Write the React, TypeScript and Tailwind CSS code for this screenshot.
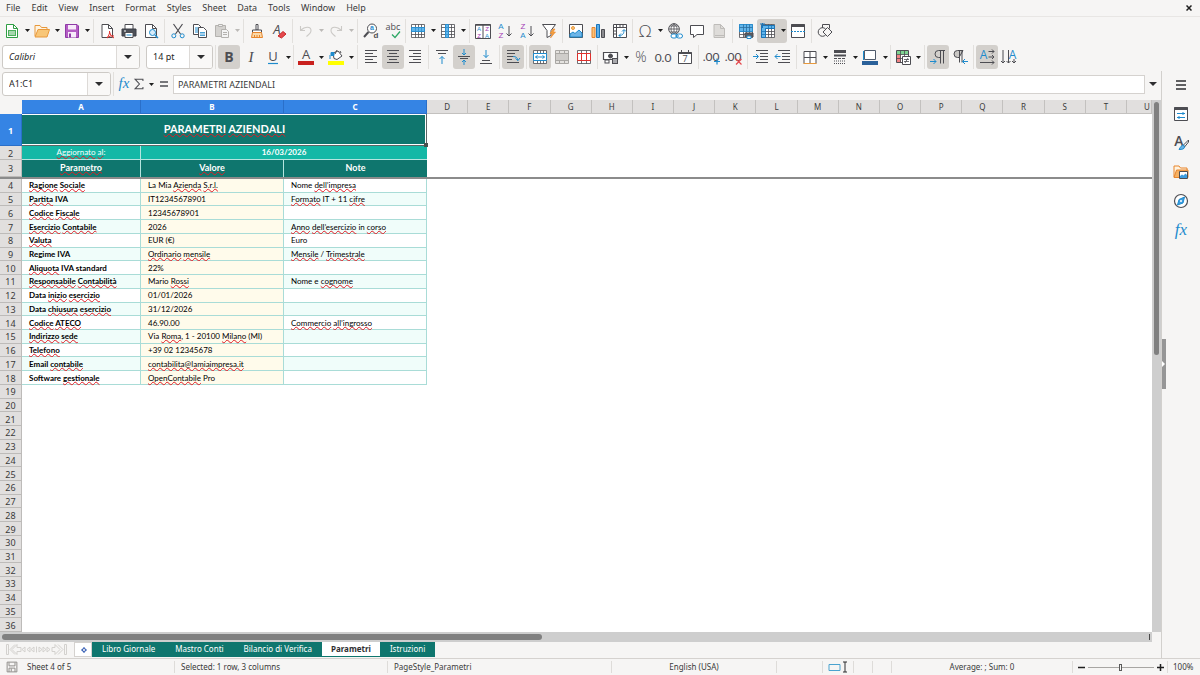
import { useState, type ReactNode } from 'react'
import clsx from 'clsx'

const INK = '#4d4d52'
const BLUE = '#1e8bcd'
const COLS = 'grid grid-cols-[22px_119px_143px_143px_repeat(17,minmax(0,1fr))_25px]'

const menus = ['File', 'Edit', 'View', 'Insert', 'Format', 'Styles', 'Sheet', 'Data', 'Tools', 'Window', 'Help']
const letters = 'ABCDEFGHIJKLMNOPQRSTU'.split('')

// words between brackets are flagged by the spell checker
const rows: [string, string, string][] = [
  ['[Ragione] [Sociale]', 'La Mia [Azienda] [S.r.l.]', 'Nome [dell’impresa]'],
  ['[Partita] IVA', 'IT12345678901', '[Formato] IT + 11 [cifre]'],
  ['[Codice] [Fiscale]', '12345678901', ''],
  ['[Esercizio] [Contabile]', '2026', '[Anno] [dell’esercizio] in [corso]'],
  ['[Valuta]', 'EUR (€)', 'Euro'],
  ['Regime IVA', '[Ordinario] [mensile]', '[Mensile] / [Trimestrale]'],
  ['[Aliquota] IVA standard', '22%', ''],
  ['[Responsabile] [Contabilità]', 'Mario [Rossi]', 'Nome e [cognome]'],
  ['Data [inizio] [esercizio]', '01/01/2026', ''],
  ['Data [chiusura] [esercizio]', '31/12/2026', ''],
  ['[Codice] [ATECO]', '46.90.00', '[Commercio] [all’ingrosso]'],
  ['[Indirizzo] [sede]', 'Via [Roma], 1 - 20100 [Milano] (MI)', ''],
  ['[Telefono]', '+39 02 12345678', ''],
  ['Email [contabile]', '[contabilita@lamiaimpresa.it]', ''],
  ['Software [gestionale]', '[OpenContabile] Pro', ''],
]

const sheets = ['Libro Giornale', 'Mastro Conti', 'Bilancio di Verifica', 'Parametri', 'Istruzioni']

function Spelled({ text }: { text: string }) {
  return (
    <span>
      {text.split(/(\[[^\]]+\])/).map((part, i) =>
        part.startsWith('[') ? (
          <span
            key={i}
            className="underline decoration-[#e01b24] decoration-wavy decoration-1 underline-offset-0 [text-decoration-skip-ink:none]"
          >
            {part.slice(1, -1)}
          </span>
        ) : (
          part
        ),
      )}
    </span>
  )
}

function Svg({ children, size = 16 }: { children: ReactNode; size?: number }) {
  return (
    <svg
      width={size}
      height={size}
      viewBox="0 0 16 16"
      fill="none"
      stroke={INK}
      strokeWidth="1"
      className="shrink-0 overflow-visible"
    >
      {children}
    </svg>
  )
}

function Glyph({
  x = 8,
  y = 13,
  size = 14,
  color = INK,
  weight = 400,
  italic = false,
  family = 'Open Sans, sans-serif',
  children,
}: {
  x?: number
  y?: number
  size?: number
  color?: string
  weight?: number
  italic?: boolean
  family?: string
  children: string
}) {
  return (
    <text
      x={x}
      y={y}
      fontSize={size}
      fill={color}
      stroke="none"
      fontWeight={weight}
      fontStyle={italic ? 'italic' : 'normal'}
      fontFamily={family}
      textAnchor="middle"
    >
      {children}
    </text>
  )
}

const SERIF = 'Liberation Serif, serif'
const SANS = 'Liberation Sans, sans-serif'

const lines = (spec: [number, number, number][]) => <path d={spec.map(([x, y, w]) => `M${x} ${y}h${w}`).join('')} />

const gridPath = 'M1.5 1.5h13v13h-13zM1.5 4.5h13M1.5 8.5h13M1.5 11.5h13M5.5 1.5v13M8.5 1.5v13M11.5 1.5v13'
const sheetGrid = <path d={gridPath} fill="#fff" strokeWidth=".8" />

const icons: Record<string, ReactNode> = {
  New: (
    <>
      <path d="M2.5 1.5h7l4 4v9h-11z" fill="#fff" stroke="#2f9e44" />
      <path d="M9.5 1.5v4h4" stroke="#2f9e44" />
      <path d="M4 7h8v6H4z" fill="#4caf5c" stroke="none" />
      <path d="M5 9h6M5 11h6" stroke="#fff" />
    </>
  ),
  Open: (
    <>
      <path d="M1 13V2.5h5l1.5 2H13V7" fill="#fff3df" stroke="#e8993c" />
      <path d="M1 14l3-7.5h11.5L13 14z" fill="#f8c677" stroke="#e8993c" />
    </>
  ),
  Save: (
    <>
      <path d="M1.5 1.5H13L14.5 3v11.5h-13z" fill="#b45cc4" stroke="#8e3aa6" />
      <path d="M4 2h8v4.5H4zM4 9h8v5.5H4z" fill="#f7eafa" stroke="none" />
      <path d="M6 10.5v4" stroke="#8e3aa6" strokeWidth="2" />
    </>
  ),
  'Export as PDF': (
    <>
      <path d="M3 1.5h6.5l4 4v9H3z" fill="#fff" />
      <path d="M9.5 1.5v4h4" />
      <path d="M8 15c2-3 3-5 2.5-7M8 15c2.5-2 4-2.5 7-2M10.5 9c1 3 2 4.5 4.5 6" stroke="#e0302c" />
    </>
  ),
  Print: (
    <>
      <path d="M4 6V1.5h8V6" fill="#fff" />
      <path d="M1 6h14v7H1z" fill="#4d5058" stroke="#3b3d44" />
      <path d="M4 9.5h8v5H4z" fill="#fff" />
      <path d="M3 8h2" stroke="#fff" />
      <path d="M5.5 12h5" stroke={BLUE} />
    </>
  ),
  'Print Preview': (
    <>
      <path d="M2.5 1.5h7l4 4v9h-11z" fill="#fff" />
      <path d="M9.5 1.5v4h4" />
      <circle cx="9.5" cy="9.5" r="3" fill="#d8ecfa" stroke={BLUE} />
      <path d="M12 12l3 3" stroke={BLUE} strokeWidth="1.5" />
    </>
  ),
  Cut: (
    <>
      <path d="M3.5 1l7 10M12.5 1l-7 10" strokeWidth="1.2" />
      <circle cx="3.8" cy="12.8" r="2" stroke={BLUE} />
      <circle cx="12.2" cy="12.8" r="2" stroke={BLUE} />
    </>
  ),
  Copy: (
    <>
      <path d="M1.5 1.5h5l3 3v7h-8z" fill="#fff" />
      <path d="M3 5h4M3 7h3M3 9h3" stroke={BLUE} />
      <path d="M6.5 4.5h5l3 3v7h-8z" fill="#fff" />
      <path d="M8 9.5h5M8 11h5M8 12.5h5" stroke={BLUE} strokeWidth=".8" />
    </>
  ),
  Paste: (
    <>
      <path d="M1.5 2.5h10v11h-10z" fill="#d4d2cf" stroke="#b4b2af" />
      <path d="M4.5 1.5h4v2h-4z" fill="#eee" stroke="#b4b2af" />
      <path d="M7.5 6.5h5l2 2v6h-7z" fill="#f4f4f4" stroke="#b4b2af" />
      <path d="M9 9.5h4M9 11.5h4" stroke="#b4b2af" />
    </>
  ),
  'Clone Formatting': (
    <>
      <path d="M7 1.5h2V7H7z" fill="#fff" />
      <path d="M3.5 7h9v2.5h-9z" fill="#fff" />
      <path d="M3.5 9.5h9l1 5h-11z" fill="#fbd9a8" stroke="#e8852c" />
      <path d="M5.5 14v-2M8 14v-2M10.5 14v-2" stroke="#e8852c" />
    </>
  ),
  'Clear Formatting': (
    <>
      <Glyph x={6} y={11} size={13} italic>
        A
      </Glyph>
      <path d="M7 13l5-4.5 3 2.5-4.5 4z" fill="#e5484d" stroke="#c92a2a" />
    </>
  ),
  Undo: <path d="M2.5 3v4.5H7M3 7c4-4 10-3.5 10 .5 0 2.5-2 4-4.5 6" stroke="#cbc9c6" strokeWidth="1.1" />,
  Redo: <path d="M13.5 3v4.5H9M13 7c-4-4-10-3.5-10 .5 0 2.5 2 4 4.5 6" stroke="#cbc9c6" strokeWidth="1.1" />,
  'Find & Replace': (
    <>
      <circle cx="9" cy="5.5" r="4.5" fill="#fff" />
      <path d="M5.5 9L1 14" strokeWidth="2" />
      <Glyph x={9} y={7} size={7} color={BLUE} weight={700} family={SANS}>
        a
      </Glyph>
      <Glyph x={13} y={15} size={8} weight={700} family={SANS}>
        d
      </Glyph>
    </>
  ),
  Spelling: (
    <>
      <Glyph y={7} size={9}>
        abc
      </Glyph>
      <path d="M7 11.5l3 3 5-6" stroke="#2fa866" strokeWidth="1.3" />
    </>
  ),
  Row: (
    <>
      {sheetGrid}
      <path d="M1.5 4.5h13v4h-13z" fill="#62b5ea" stroke="#2a8fd0" />
      <path d="M5.5 4.5v4M8.5 4.5v4M11.5 4.5v4" stroke="#2a8fd0" strokeWidth=".8" />
    </>
  ),
  Column: (
    <>
      {sheetGrid}
      <path d="M5.5 1.5h3v13h-3z" fill="#62b5ea" stroke="#2a8fd0" />
      <path d="M5.5 4.5h3M5.5 8.5h3M5.5 11.5h3" stroke="#2a8fd0" strokeWidth=".8" />
    </>
  ),
  Sort: (
    <>
      <path d="M.5 1.5h15v14H.5zM8 1.5v14" fill="#fff" />
      <path d="M.5 2h15" strokeWidth="1.5" />
      <Glyph x={4} y={8} size={6} color={BLUE} family={SANS}>
        A
      </Glyph>
      <Glyph x={4} y={15} size={6} color="#a33bb5" family={SANS}>
        Z
      </Glyph>
      <Glyph x={12} y={8} size={6} color="#a33bb5" family={SANS}>
        Z
      </Glyph>
      <Glyph x={12} y={15} size={6} color={BLUE} family={SANS}>
        A
      </Glyph>
    </>
  ),
  'Sort Ascending': (
    <>
      <Glyph x={4} y={6} size={8} color={BLUE} family={SANS}>
        A
      </Glyph>
      <Glyph x={4} y={15} size={8} color="#a33bb5" family={SANS}>
        Z
      </Glyph>
      <path d="M12 3v10M9.5 10.5L12 13l2.5-2.5" />
    </>
  ),
  'Sort Descending': (
    <>
      <Glyph x={4} y={6} size={8} color="#a33bb5" family={SANS}>
        Z
      </Glyph>
      <Glyph x={4} y={15} size={8} color={BLUE} family={SANS}>
        A
      </Glyph>
      <path d="M12 3v10M9.5 10.5L12 13l2.5-2.5" />
    </>
  ),
  AutoFilter: (
    <>
      <path d="M1.5 1.5h13l-4.500 6v5l-4 2V7.500z" fill="#fff" />
      <path d="M12 6l-3 4.500h2.500L9.500 15l5-6h-2.500L14 6z" fill="#f5a13c" stroke="#e8852c" strokeWidth=".6" />
    </>
  ),
  Image: (
    <>
      <path d="M1.5 1.5h13v13h-13z" fill="#fff" />
      <circle cx="5" cy="5" r="1.5" fill="#f9c27a" stroke="#e8993c" />
      <path d="M2 14v-3l3-2 2 1.5L11 7l3 3v4z" fill="#6db5e8" stroke={BLUE} />
    </>
  ),
  Chart: (
    <>
      <path d="M2 4.5h3v10H2z" fill="#f9c27a" stroke="#e8852c" />
      <path d="M6.5 1.5h3v13h-3z" fill="#5aaeea" stroke="#1b75b8" />
      <path d="M11.5 6.5h3v8h-3z" fill="#8a8a8e" />
    </>
  ),
  'Pivot Table': (
    <>
      <path d="M1.5 1.5h13v13h-13zM1.5 4.5h13M4.5 1.5v13M8 1.5v3M11 1.5v3M1.5 8h3M1.5 11h3" fill="#fff" />
      <path d="M7 12.5c4 0 5-2 5-5.5M7 12.5l2-2M7 12.5l2 2M12 6.5l-2 2M12 6.5l2 2" stroke={BLUE} />
    </>
  ),
  'Special Character': (
    <Glyph size={17} y={14} weight={300}>
      Ω
    </Glyph>
  ),
  Hyperlink: (
    <>
      <circle cx="7" cy="6" r="5.3" fill="#fff" />
      <path d="M1.7 6h10.6M7 .7v10.6M3 3h8M3 9h8M7 .7c-4 3-4 7.5 0 10.6M7 .7c4 3 4 7.5 0 10.6" strokeWidth=".8" />
      <rect x="4" y="11" width="6" height="4" rx="2" stroke={BLUE} fill="#fff" />
      <rect x="9.5" y="11" width="6" height="4" rx="2" stroke={BLUE} fill="#fff" />
      <path d="M8 13h4" stroke={BLUE} />
    </>
  ),
  Comment: <path d="M1.5 2.5h13v9H8l-3.500 3v-3h-3z" fill="#fff" />,
  'Headers and Footers': (
    <>
      <path d="M3 1.5h6.5l4 4v9H3z" fill="#dedcd9" stroke="#bebcb9" />
      <path d="M9.5 1.5v4h4M4 12.5h9" stroke="#bebcb9" />
    </>
  ),
  'Print Area': (
    <>
      {sheetGrid}
      <path d="M1.5 1.5h13v7h-13z" fill="#62b5ea" stroke="#2a8fd0" />
      <path d="M1.5 4.5h13M5.5 1.5v7M8.5 1.5v7M11.5 1.5v7" stroke="#2a6fa0" strokeWidth=".8" />
      <path d="M7 10h8v4H7z" fill="#5a5c62" />
      <path d="M9 13h4v2.5H9z" fill="#fff" stroke={BLUE} />
    </>
  ),
  Freeze: (
    <>
      {sheetGrid}
      <path d="M1.5 2.5h13v3h-9v9h-4z" fill="#62b5ea" stroke="#1b75b8" />
      <path d="M8.5 2.5v3M11.5 2.5v3M1.5 8.5h4M1.5 11.5h4" stroke="#1b75b8" strokeWidth=".8" />
      <path d="M0 1h5M2.5 0v5" stroke="#1b75b8" />
    </>
  ),
  'Split Window': (
    <>
      <path d="M1.5 1.5h13v13h-13z" fill="#fff" />
      <path d="M1.5 2.5h13" strokeWidth="3" />
      <path d="M1 8.5h14" stroke={BLUE} strokeDasharray="2 1" />
    </>
  ),
  Shapes: (
    <>
      <path d="M5.5 5V1.5h7v4" />
      <circle cx="5.5" cy="9" r="4.3" />
      <path d="M10.5 4.500l4.500 4.500-4.500 4.500L6 9z" fill="#f6f5f4" />
    </>
  ),
  Bold: (
    <Glyph weight={700} size={14}>
      B
    </Glyph>
  ),
  Italic: (
    <Glyph italic size={15} family={SERIF}>
      I
    </Glyph>
  ),
  Underline: (
    <>
      <Glyph size={13} y={12}>
        U
      </Glyph>
      <path d="M3 14.5h10" stroke={BLUE} strokeWidth="1.2" />
    </>
  ),
  'Font Color': (
    <>
      <Glyph size={13} y={10}>
        A
      </Glyph>
      <path d="M0 14h16" stroke="#c9211e" strokeWidth="4" />
    </>
  ),
  Highlighting: (
    <>
      <path d="M5 4l5-2 4 5-5 3.5-3-1z" fill="#fff" />
      <path d="M7 5l2-4M12 2l1 2" />
      <path d="M3 3.5h3v3H3zM2 6v4" stroke={BLUE} fill={BLUE} />
      <path d="M0 14h16" stroke="#ffff00" strokeWidth="4" />
    </>
  ),
  'Align Left': lines([[2, 1.5, 12], [2, 4.5, 8], [2, 7.5, 12], [2, 10.5, 8], [2, 13.5, 12]]),
  'Align Center': lines([[2, 1.5, 12], [4, 4.5, 8], [2, 7.5, 12], [4, 10.5, 8], [2, 13.5, 12]]),
  'Align Right': lines([[2, 1.5, 12], [6, 4.5, 8], [2, 7.5, 12], [6, 10.5, 8], [2, 13.5, 12]]),
  'Align Top': (
    <>
      {lines([[2, 1.5, 12], [4, 4.5, 8]])}
      <path d="M8 15V7.5M5.5 10L8 7.5l2.5 2.5" stroke={BLUE} />
    </>
  ),
  'Center Vertically': (
    <>
      {lines([[2, 7.5, 12], [4, 9.5, 8]])}
      <path d="M8 0v6M6 4l2 2 2-2M8 16v-5M6 13l2-2 2 2" stroke={BLUE} />
    </>
  ),
  'Align Bottom': (
    <>
      {lines([[2, 14.5, 12], [4, 11.5, 8]])}
      <path d="M8 1v7.5M5.5 6L8 8.5 10.5 6" stroke={BLUE} />
    </>
  ),
  'Wrap Text': (
    <>
      {lines([[2, 1.5, 12], [2, 4.5, 8], [2, 7.5, 6], [2, 10.5, 5], [2, 13.5, 12]])}
      <path d="M8 7.5c3 0 4.5 1 5 4M10.5 9.5l2.5 2 2-2.5" stroke={BLUE} />
    </>
  ),
  'Merge and Center': (
    <>
      {sheetGrid}
      <path d="M1.5 4.5h13v7h-13z" fill="#fff" stroke={BLUE} />
      <path d="M3.5 8h9M5.5 6.5L3.5 8l2 1.5M10.5 6.5l2 1.5-2 1.5" stroke={BLUE} />
    </>
  ),
  'Merge Cells': (
    <>
      <path
        d="M1.5 1.5h13v13h-13zM1.5 4.5h13M1.5 11.5h13M5.5 1.5v3M10.5 1.5v3M5.5 11.5v3M10.5 11.5v3"
        fill="#e4e2df"
        stroke="#a9a7a4"
      />
      <path d="M2 5h12v6H2z" fill="#cfcdca" stroke="none" />
    </>
  ),
  'Split Cells': (
    <>
      <path d="M1.5 1.5h13v13h-13zM5.5 1.5v13M10.5 1.5v13" fill="#fff" strokeWidth=".8" />
      <path d="M1.5 4.5h13v7h-13zM5.5 4.5v7M10.5 4.5v7" stroke="#e0302c" />
    </>
  ),
  Currency: (
    <>
      <path d="M.5 3.5h14v7H.5z" fill="#fff" strokeWidth="1.2" />
      <circle cx="7.5" cy="7" r="2" fill={INK} />
      <rect x="2" y="11" width="4" height="3" fill="#fff" />
      <rect x="9.5" y="9.5" width="5" height="5" fill="#a9a9ad" />
    </>
  ),
  Percent: (
    <Glyph size={14} weight={300}>
      %
    </Glyph>
  ),
  Number: (
    <Glyph size={12} weight={400} family="Lato, sans-serif">
      0.0
    </Glyph>
  ),
  Date: (
    <>
      <path d="M1.5 3.5h13v11h-13z" fill="#fff" />
      <path d="M1.5 4h13" strokeWidth="2" />
      <path d="M4.5 1v3M11.5 1v3" />
      <Glyph size={9} y={13}>
        7
      </Glyph>
    </>
  ),
  'Add Decimal Place': (
    <>
      <Glyph size={12} x={7} y={12} weight={400} family="Lato, sans-serif">
        .00
      </Glyph>
      <path d="M10 12.5h6M13 9.5v6" stroke={BLUE} strokeWidth="1.2" />
    </>
  ),
  'Delete Decimal Place': (
    <>
      <Glyph size={12} x={7} y={12} weight={400} family="Lato, sans-serif">
        .00
      </Glyph>
      <path d="M10 10l5.5 5.5M15.5 10L10 15.5" stroke="#e5484d" strokeWidth="1.2" />
    </>
  ),
  'Increase Indent': (
    <>
      {lines([[3, 1.5, 12], [7, 4.5, 8], [7, 7.5, 8], [7, 10.5, 8], [3, 13.5, 12]])}
      <path d="M0 7.5h5M3 5l2.5 2.5L3 10" stroke={BLUE} />
    </>
  ),
  'Decrease Indent': (
    <>
      {lines([[3, 1.5, 12], [7, 4.5, 8], [7, 7.5, 8], [7, 10.5, 8], [3, 13.5, 12]])}
      <path d="M5.5 7.5H0M2.5 5L0 7.5 2.5 10" stroke={BLUE} />
    </>
  ),
  Borders: (
    <>
      <path d="M2 2.5h12v12H2zM8 2.5v12M2 8.5h12" fill="#fff" />
      <path d="M1.5 14.5h13" stroke="#e8993c" />
    </>
  ),
  'Border Style': (
    <>
      <path d="M2 2.5h12" strokeWidth="3" />
      <path d="M2 6.5h12" strokeWidth="2" />
      <path d="M2 9.5h12" strokeDasharray="3 1" />
      <path d="M2 12h12M2 14.5h12" strokeDasharray="1 1" />
    </>
  ),
  'Border Color': (
    <>
      <path d="M2.5 1.5h11v9h-11z" fill="#fff" stroke="#4f5a6a" />
      <path d="M1.5 2v9" stroke={BLUE} />
      <path d="M0 14h16" stroke="#2a6099" strokeWidth="4" />
    </>
  ),
  'Conditional Formatting': (
    <>
      <path d="M1.5 1.5h12v12h-12z" fill="#fff" />
      <path d="M2 2h11v3.5H2z" fill="#7ed491" stroke="none" />
      <path d="M2 6h4v7H2z" fill="#f28385" stroke="none" />
      <path d="M1.5 5.5h12M1.5 9.5h12M5.5 1.5v12M9.5 1.5v12" strokeWidth=".8" />
      <path d="M7.5 7.5h8v8h-8z" fill="#fff" />
      <path d="M9 10.5h5M9 12.5h5M13 9l-3 5" strokeWidth=".8" />
    </>
  ),
  'Left-to-Right': (
    <>
      <path d="M15 1.5H8.5a3.5 3.5 0 0 0 0 7H10M10.5 1.5v13M13.5 1.5v13" />
      <path d="M0 12.5h6M3.5 10L6 12.5 3.5 15" stroke={BLUE} />
    </>
  ),
  'Right-to-Left': (
    <>
      <path d="M11 1.5H5.5a3.5 3.5 0 0 0 0 7H7z" fill="#c9c7c4" />
      <path d="M7.5 1.5v12M10 1.5v12" />
      <path d="M16 12.5h-5.5M13 10l-2.5 2.5L13 15" stroke={BLUE} />
    </>
  ),
  'Text Left to Right': (
    <>
      <Glyph x={4.5} y={10} size={12} color={BLUE}>
        A
      </Glyph>
      <path d="M9.5 2.5H15M9.5 8H15M1 13.5h14M13 .5l2 2-2 2M13 6l2 2-2 2M13 11.5l2 2-2 2" />
    </>
  ),
  'Text Top to Bottom': (
    <>
      <Glyph x={11.5} y={10} size={12} color={BLUE}>
        A
      </Glyph>
      <path d="M2 1v13M7.5 1v13M13 10v4M0 12l2 2 2-2M5.5 12l2 2 2-2M11 12l2 2 2-2" />
    </>
  ),
  'Function Wizard': (
    <Glyph italic size={15} color={BLUE} y={12} family={SERIF}>
      fx
    </Glyph>
  ),
  'Select Function': <path d="M12.5 4.5v-2h-9L8.5 8l-5 5.5h9v-2" strokeWidth="1.2" />,
  Formula: <path d="M4 6h8M4 10h8" strokeWidth="1.5" />,
  'Sidebar Settings': <path d="M3 4h10M3 8h10M3 12h10" stroke="#2e2e30" strokeWidth="1.4" />,
  Properties: (
    <>
      <path d="M1.5 1.5h13v13h-13z" fill="#fff" />
      <path d="M1.5 2.5h13" strokeWidth="3" />
      <path d="M4 7.5h8M4 11.5h8M10 6v3M6 10v3" stroke={BLUE} />
    </>
  ),
  'Style List': (
    <>
      <Glyph x={6} y={11} size={14} weight={600}>
        A
      </Glyph>
      <path d="M15.5 5l-5 5 1 2 4-5z" fill="#fff" />
      <path d="M10.5 10c-2 0-3 2-4.5 4.5 3 0 5.5-.5 5.5-2.5z" fill="#6db5e8" stroke={BLUE} />
    </>
  ),
  Gallery: (
    <>
      <path d="M1 13V2h5l1.5 2H14v3" fill="#fff3df" stroke="#e8852c" />
      <path d="M1 13.5L3.5 6H15v7.5z" fill="#f6b163" stroke="#e8852c" />
      <path d="M6.5 7.5h8v7h-8z" fill="#fff" />
      <path d="M7 14v-2l2-1.5 1.5 1 2-2 1.5 1.5v3z" fill="#3d9ce0" stroke="none" />
    </>
  ),
  Navigator: (
    <>
      <circle cx="8" cy="8" r="6.5" fill="#fff" strokeWidth="1.2" />
      <path d="M11.5 4L10 10l-5.500 2L6 6.500z" fill="#3d9ce0" stroke={BLUE} />
      <circle cx="8" cy="8" r="1" fill="#fff" stroke="none" />
    </>
  ),
  Functions: (
    <Glyph italic size={17} color={BLUE} y={13} family={SERIF}>
      fx
    </Glyph>
  ),
}

function Caret({ muted = false }: { muted?: boolean }) {
  return (
    <svg width="5" height="3" viewBox="0 0 5 3" className={muted ? 'fill-[#bcbab7]' : 'fill-[#1f1f1f]'}>
      <path d="M0 0h5L2.5 3z" />
    </svg>
  )
}

function Tool({ name, menu, on, muted }: { name: string; menu?: boolean; on?: boolean; muted?: boolean }) {
  return (
    <button aria-label={name} aria-pressed={on} className={clsx('flex h-6 items-center rounded-[3px]', on && 'bg-[#d3d0cc]')}>
      <span className="flex w-[22px] justify-center">
        <Svg>{icons[name]}</Svg>
      </span>
      {menu && (
        <span className="flex w-2 justify-center">
          <Caret muted={muted} />
        </span>
      )}
    </button>
  )
}

function Sep({ tight = false }: { tight?: boolean }) {
  return (
    <span className={clsx('flex h-6 justify-center', tight ? 'w-[3px]' : 'w-[5px]')}>
      <span className="w-px bg-[#e2e0dd]" />
    </span>
  )
}

function Combo({ label, value, className, inputClass }: { label: string; value: string; className: string; inputClass?: string }) {
  return (
    <div className={clsx('flex h-6 overflow-hidden rounded-[3px] border border-[#cdcac6] bg-white', className)}>
      <input
        aria-label={label}
        defaultValue={value}
        className={clsx('min-w-0 flex-1 bg-transparent px-[6px] text-[9px] text-[#1f1f1f] outline-none', inputClass)}
      />
      <button aria-label={`${label} list`} className="flex w-[23px] items-center justify-center border-l border-[#dddad7] bg-[#f9f8f7]">
        <svg width="8" height="4" viewBox="0 0 8 4" className="fill-[#2e2e30]">
          <path d="M0 0h8L4 4z" />
        </svg>
      </button>
    </div>
  )
}

function RowHead({ n, on }: { n: number; on?: boolean }) {
  return (
    <th
      scope="row"
      className={clsx(
        'flex items-center justify-center border-r border-b pt-[2px] text-[9px] leading-[10px]',
        on ? 'border-[#2a6fc9] bg-[#3584e4] font-bold text-white' : 'border-[#bdbbb9] bg-[#e1dfde] font-normal text-[#3a3a3a]',
      )}
    >
      {n}
    </th>
  )
}

function Sheet() {
  const head = 'flex items-center justify-center border-[#b5e5df] font-[Lato] font-bold leading-[10px] text-white'
  const cell =
    'flex items-center border-r border-b border-[#a9dcd7] px-[7px] font-[Lato] text-[8px] leading-[10px] whitespace-nowrap text-black'
  return (
    <table className="flex min-w-0 flex-1 flex-col bg-white">
      <thead className="shrink-0">
        <tr className={clsx(COLS, 'h-[14px]')}>
          <td className="bg-[#f6f5f4]" />
          {letters.map((l, i) => (
            <th
              key={l}
              scope="col"
              className={clsx(
                'flex items-center overflow-hidden border-r border-b text-[8px]',
                i < 3 ? 'border-[#2a6fc9] bg-[#3584e4] font-bold text-white' : 'border-[#c3c1bf] bg-[#e1dfde] font-normal text-[#3a3a3a]',
                i === 20 ? 'pl-[17px]' : 'justify-center',
              )}
            >
              {l}
            </th>
          ))}
        </tr>
        <tr className={clsx(COLS, 'h-8')}>
          <RowHead n={1} on />
          <td
            colSpan={3}
            className={clsx(
              head,
              'relative col-span-3 bg-[#0f766e] pb-[2px] text-[11px] shadow-[inset_-1px_-1px_0_#5c6665,inset_-2px_-2px_0_#ffffff,inset_0_1px_0_#ffffff]',
            )}
          >
            <Spelled text="[PARAMETRI] [AZIENDALI]" />
            <span className="absolute -right-px -bottom-px size-1 bg-[#4a5250]" />
          </td>
        </tr>
        <tr className={clsx(COLS, 'h-[14px]')}>
          <RowHead n={2} />
          <td className={clsx(head, 'border-r border-b bg-[#14b8a6] pb-[2px] text-[8px] font-normal')}>
            <Spelled text="[Aggiornato] [al]:" />
          </td>
          <td colSpan={2} className={clsx(head, 'col-span-2 border-b bg-[#14b8a6] pb-[2px] text-[8px]')}>
            16/03/2026
          </td>
        </tr>
        <tr className={clsx(COLS, 'h-[19px] border-b-2 border-[#8b8b8b]')}>
          <RowHead n={3} />
          <th className={clsx(head, 'border-r bg-[#0f766e] pb-px text-[9px]')}>
            <Spelled text="[Parametro]" />
          </th>
          <th className={clsx(head, 'border-r bg-[#0f766e] pb-px text-[9px]')}>
            <Spelled text="[Valore]" />
          </th>
          <th className={clsx(head, 'bg-[#0f766e] pb-px text-[9px]')}>Note</th>
        </tr>
      </thead>
      <tbody className="grid min-h-0 flex-1 auto-rows-fr">
        {Array.from({ length: 33 }, (_, i) => (
          <tr key={i} className={clsx(COLS, 'min-h-0')}>
            <RowHead n={i + 4} />
            {rows[i]?.map((text, c) => (
              <td
                key={c}
                className={clsx(cell, c === 0 && 'font-bold', c === 1 ? 'bg-[#fffbeb]' : i % 2 === 1 ? 'bg-[#f0fdfa]' : 'bg-white')}
              >
                <Spelled text={text} />
              </td>
            ))}
          </tr>
        ))}
      </tbody>
    </table>
  )
}

function StatusSep() {
  return <span className="h-3 w-px shrink-0 bg-[#dedcd9]" />
}

export default function App() {
  const [active, setActive] = useState('Parametri')

  return (
    <div className="flex h-screen flex-col overflow-hidden bg-[#f6f5f4] font-['Noto_Sans',sans-serif] text-[#3a3a3a]">
      <nav className="flex h-[17px] shrink-0 items-center gap-[11px] border-b border-[#e8e6e4] px-[6px] text-[9px]">
        {menus.map((m) => (
          <button key={m}>{m}</button>
        ))}
        <button aria-label="Close" className="mr-[2px] ml-auto">
          <svg width="6" height="6" viewBox="0 0 6 6" stroke="#1f1f1f" strokeWidth="1.5">
            <path d="M.5.5l5 5M5.5.5l-5 5" />
          </svg>
        </button>
      </nav>

      <div className="flex h-[27px] shrink-0 items-center px-px">
        <Tool name="New" menu />
        <Tool name="Open" menu />
        <Tool name="Save" menu />
        <Sep />
        <Tool name="Export as PDF" />
        <Tool name="Print" />
        <Tool name="Print Preview" />
        <Sep />
        <Tool name="Cut" />
        <Tool name="Copy" />
        <Tool name="Paste" menu muted />
        <Sep />
        <Tool name="Clone Formatting" />
        <Tool name="Clear Formatting" />
        <Sep />
        <Tool name="Undo" menu muted />
        <Tool name="Redo" menu muted />
        <Sep />
        <Tool name="Find & Replace" />
        <Tool name="Spelling" />
        <Sep tight />
        <Tool name="Row" menu />
        <Tool name="Column" menu />
        <Sep />
        <Tool name="Sort" />
        <Tool name="Sort Ascending" />
        <Tool name="Sort Descending" />
        <Tool name="AutoFilter" />
        <Sep />
        <Tool name="Image" />
        <Tool name="Chart" />
        <Tool name="Pivot Table" />
        <Sep tight />
        <Tool name="Special Character" menu />
        <Tool name="Hyperlink" />
        <Tool name="Comment" />
        <Tool name="Headers and Footers" />
        <Sep />
        <Tool name="Print Area" />
        <Tool name="Freeze" menu on />
        <Tool name="Split Window" />
        <Sep />
        <Tool name="Shapes" />
      </div>

      <div className="flex h-[27px] shrink-0 items-center px-[2px] pb-px">
        <Combo label="Font Name" value="Calibri" className="mr-[6px] w-[138px]" inputClass="italic" />
        <Combo label="Font Size" value="14 pt" className="w-[67px]" />
        <Sep />
        <Tool name="Bold" on />
        <Tool name="Italic" />
        <Tool name="Underline" menu />
        <Sep tight />
        <Tool name="Font Color" menu />
        <Tool name="Highlighting" menu />
        <Sep />
        <Tool name="Align Left" />
        <Tool name="Align Center" on />
        <Tool name="Align Right" />
        <Sep />
        <Tool name="Align Top" />
        <Tool name="Center Vertically" on />
        <Tool name="Align Bottom" />
        <Sep />
        <Tool name="Wrap Text" on />
        <Sep />
        <Tool name="Merge and Center" on />
        <Tool name="Merge Cells" />
        <Tool name="Split Cells" />
        <Sep />
        <Tool name="Currency" menu />
        <Tool name="Percent" />
        <Tool name="Number" />
        <Tool name="Date" />
        <Sep />
        <Tool name="Add Decimal Place" />
        <Tool name="Delete Decimal Place" />
        <Sep />
        <Tool name="Increase Indent" />
        <Tool name="Decrease Indent" />
        <Sep />
        <Tool name="Borders" menu />
        <Tool name="Border Style" menu />
        <Tool name="Border Color" menu />
        <Sep tight />
        <Tool name="Conditional Formatting" menu />
        <Sep />
        <Tool name="Left-to-Right" on />
        <Tool name="Right-to-Left" />
        <Sep />
        <Tool name="Text Left to Right" on />
        <Tool name="Text Top to Bottom" />
      </div>

      <div className="flex min-h-0 flex-1">
        <main className="flex min-w-0 flex-1 flex-col">
          <div className="flex h-[29px] shrink-0 items-center pb-[3px] pl-[2px]">
            <Combo label="Name Box" value="A1:C1" className="w-[109px]" />
            <Sep />
            <button aria-label="Function Wizard" className="flex w-4 justify-center">
              <Svg>{icons['Function Wizard']}</Svg>
            </button>
            <button aria-label="Select Function" className="flex items-center">
              <Svg size={14}>{icons['Select Function']}</Svg>
              <span className="flex w-[10px] justify-center">
                <Caret />
              </span>
            </button>
            <button aria-label="Formula" className="mr-px flex w-4 justify-center">
              <Svg>{icons.Formula}</Svg>
            </button>
            <input
              aria-label="Input line"
              defaultValue="PARAMETRI AZIENDALI"
              className="h-[19px] min-w-0 flex-1 border border-[#d5d2cf] bg-white px-1 text-[9px] text-[#3a3a3a] outline-none"
            />
            <button aria-label="Expand formula bar" className="flex w-4 justify-center">
              <svg width="8" height="4" viewBox="0 0 8 4" className="fill-[#2e2e30]">
                <path d="M0 0h8L4 4z" />
              </svg>
            </button>
          </div>
          <div className="flex min-h-0 flex-1">
            <Sheet />
            <div className="w-[9px] shrink-0 bg-[#cecece] px-[2px] py-[2px]">
              <div className="h-[48%] rounded-full bg-[#808080]" />
            </div>
          </div>
          <div className="mr-[9px] flex h-[10px] shrink-0 items-center justify-between bg-[#cecece] px-[2px]">
            <div className="h-[6px] w-[47%] rounded-full bg-[#808080]" />
            <div className="h-[6px] w-px bg-[#4a4a4a]" />
          </div>
          <div className="flex h-[16px] shrink-0 items-start">
            <svg width="74" height="15" viewBox="0 0 74 15" fill="none" stroke="#d3d1ce" strokeWidth="1">
              <path d="M6.5 2.5v10h2v-10zM17 2.5l-5 5 5 5v-3h4v-4h-4zM15 2.5l-5 5 5 5M25 5l-3 2.5 3 2.5zM30 5l-3 2.5 3 2.5zM34 5l-3 2.5 3 2.5zM36.5 4.5v6M39 5v5l3-2.5zM43 5v5l3-2.5zM47 5v5l3-2.5zM55 2.5l5 5-5 5v-3h-3v-4h3zM58 2.5l5 5-5 5M64.5 2.5v10h2v-10z" />
            </svg>
            <button aria-label="Add sheet" className="flex h-[15px] w-[18px] items-center justify-end border border-[#d5d2cf] bg-white pr-[4px]">
              <svg width="6" height="6" viewBox="0 0 7 7" fill="none" stroke="#3b62b5" strokeWidth="1.3">
                <path d="M3.5 0v7M0 3.5h7" />
                <circle cx="3.5" cy="3.5" r="1.8" fill="#fff" />
              </svg>
            </button>
            <div role="tablist" className="flex h-[15px] text-[8px]">
              {sheets.map((s) => (
                <button
                  key={s}
                  role="tab"
                  aria-selected={s === active}
                  onClick={() => setActive(s)}
                  className={clsx(
                    'border-b border-[#0f766e]',
                    s === active ? 'bg-white px-[9px] font-bold text-[#2e2e30]' : 'bg-[#0f766e] px-[10px] text-white',
                  )}
                >
                  {s}
                </button>
              ))}
            </div>
          </div>
        </main>
        <aside className="relative flex w-[39px] shrink-0 flex-col items-center gap-[13px] border-l border-[#d2d0cd] pt-[6px]">
          <button
            aria-label="Hide sidebar"
            className="absolute top-[268px] left-0 flex h-[50px] w-[4px] items-center bg-[#969696]"
          >
            <svg width="3" height="6" viewBox="0 0 3 6" fill="#fff">
              <path d="M0 0l3 3-3 3z" />
            </svg>
          </button>
          {['Sidebar Settings', 'Properties', 'Style List', 'Gallery', 'Navigator', 'Functions'].map((name) => (
            <button key={name} aria-label={name}>
              <Svg>{icons[name]}</Svg>
            </button>
          ))}
        </aside>
      </div>

      <footer className="flex h-[17px] shrink-0 items-center border-t border-[#d5d2cf] text-[8px]">
        <span className="flex w-[27px] justify-center pr-[3px]">
          <Svg size={12}>
            <path d="M1.5 1.5h13v13h-13zM4 2v4.5h8V2M4 14.5v-5h8v5M7 10v4" stroke="#8e8c89" strokeWidth="1.3" />
          </Svg>
        </span>
        <span className="w-[147px]">Sheet 4 of 5</span>
        <StatusSep />
        <span className="w-[212px] px-[6px]">Selected: 1 row, 3 columns</span>
        <StatusSep />
        <span className="w-[223px] px-[6px]">PageStyle_Parametri</span>
        <StatusSep />
        <span className="flex-1 text-center">English (USA)</span>
        <StatusSep />
        <span className="w-[45px]" />
        <StatusSep />
        <span className="flex w-[30px] justify-center">
          <svg width="20" height="12" viewBox="0 0 20 12" fill="none">
            <path d="M1 3.5h11v6H1z" stroke="#4aa3cf" />
            <path d="M15 1h4M17 1v10M15 11h4" stroke="#2e2e30" />
          </svg>
        </span>
        <StatusSep />
        <span className="w-[18px]" />
        <StatusSep />
        <span className="w-[18px]" />
        <StatusSep />
        <span className="w-[180px] text-center">Average: ; Sum: 0</span>
        <StatusSep />
        <div className="flex items-center gap-[3px] pr-[3px] pl-[5px]">
          <button aria-label="Zoom out">
            <svg width="7" height="7" viewBox="0 0 7 7" stroke="#1f1f1f" strokeWidth="1.5">
              <path d="M0 3.5h7" />
            </svg>
          </button>
          <input
            type="range"
            aria-label="Zoom"
            defaultValue={49}
            className="h-[7px] w-[66px] appearance-none bg-[linear-gradient(#a8a6a3,#a8a6a3)] bg-[length:100%_1px] bg-center bg-no-repeat [&::-webkit-slider-thumb]:h-[7px] [&::-webkit-slider-thumb]:w-[3px] [&::-webkit-slider-thumb]:appearance-none [&::-webkit-slider-thumb]:border [&::-webkit-slider-thumb]:border-[#5a5a5a] [&::-webkit-slider-thumb]:bg-[#f6f5f4]"
          />
          <button aria-label="Zoom in">
            <svg width="7" height="7" viewBox="0 0 7 7" stroke="#1f1f1f" strokeWidth="1.5">
              <path d="M0 3.5h7M3.5 0v7" />
            </svg>
          </button>
        </div>
        <StatusSep />
        <span className="w-8 pl-[5px]">100%</span>
      </footer>
    </div>
  )
}
